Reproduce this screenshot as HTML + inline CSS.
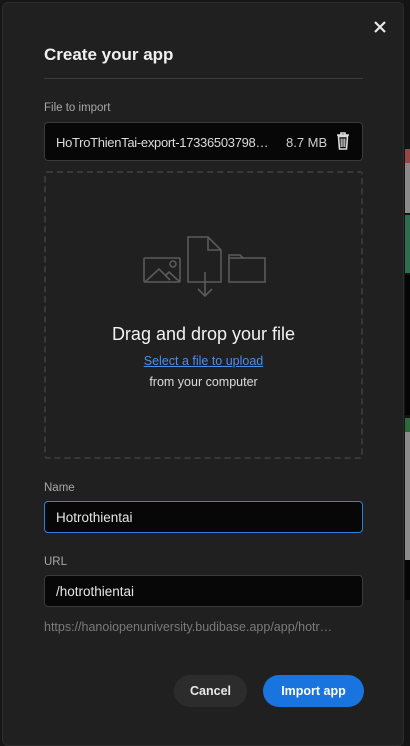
<!DOCTYPE html>
<html><head><style>
*{box-sizing:border-box;margin:0;padding:0}
body{width:410px;height:746px;background:#161616;font-family:"Liberation Sans",sans-serif;position:relative;overflow:hidden;color:#e0e0e0}
.strip{position:absolute;left:404px;top:0;width:6px;height:746px;background:#141414}
.modal{position:absolute;left:2px;top:2px;width:402px;height:744px;background:#202020;border:1px solid #2c2c2c;border-radius:6px}
.a{position:absolute}
.lbl{font-size:11.5px;color:#a8a8a8}
.inp{position:absolute;left:44px;width:319px;height:32px;background:#070707;border:1px solid #3a3a3a;border-radius:4px;font-size:13.5px;color:#e6e6e6;padding:8px 11px;line-height:15px}
</style></head><body>
<div class="strip">
<div class="a" style="left:1px;top:149px;width:5px;height:14px;background:#9a4545"></div>
<div class="a" style="left:1px;top:163px;width:5px;height:50px;background:#8a8a8a"></div>
<div class="a" style="left:1px;top:215px;width:5px;height:58px;background:#2d6e4e"></div>
<div class="a" style="left:1px;top:275px;width:5px;height:140px;background:#050505"></div>
<div class="a" style="left:1px;top:418px;width:5px;height:14px;background:#2b6b38"></div>
<div class="a" style="left:1px;top:432px;width:5px;height:128px;background:#8c8c8c"></div>
<div class="a" style="left:1px;top:560px;width:5px;height:40px;background:#050505"></div>
</div>
<div class="modal"></div>
<svg class="a" style="left:373px;top:20px" width="14" height="14" viewBox="0 0 14 14"><path d="M2 2L12 12M12 2L2 12" stroke="#e8e8e8" stroke-width="2.2"/></svg>
<div class="a" style="left:44px;top:45px;font-size:17px;font-weight:bold;color:#f0f0f0">Create your app</div>
<div class="a" style="left:44px;top:78px;width:319px;height:1px;background:#3c3c3c"></div>
<div class="a lbl" style="left:44px;top:102px">File to import</div>
<div class="inp" style="top:122px;height:39px;padding:12px 11px;border-color:#3a3a3a"><span style="color:#dcdcdc;font-size:13px;letter-spacing:-0.3px">HoTroThienTai-export-17336503798…</span><span class="a" style="left:241px;top:12px;color:#cfcfcf;font-size:13px">8.7 MB</span>
<svg class="a" style="left:291px;top:9px" width="14" height="18" viewBox="0 0 14 18"><path d="M1 3H13M5 3V1H9V3M2.5 4.5L3.5 17H10.5L11.5 4.5Z" fill="none" stroke="#ddd" stroke-width="1.6"/><path d="M5.2 6.5V15M7 6.5V15M8.8 6.5V15" stroke="#ddd" stroke-width="1.1"/></svg></div>
<div class="a" style="left:44px;top:171px;width:319px;height:288px;border:2px dashed #383838;border-radius:3px"></div>
<svg class="a" style="left:130px;top:220px" width="150" height="80" viewBox="0 0 150 80" fill="none" stroke="#5a5a5a" stroke-width="1.6">
<rect x="14" y="38" width="36" height="24" rx="1"/><circle cx="43" cy="44" r="3"/><path d="M15 62L29 49L40 60M35 56L39 52L50 62"/>
<path d="M58 17H78L91 30V62H58Z"/><path d="M78 17V30H91"/><path d="M75 52V76M68 69L75 76L82 69"/>
<path d="M99 62V35H110L113 38H135V62Z"/><path d="M99 38H113"/>
</svg>
<div class="a" style="left:44px;width:319px;top:324px;text-align:center;font-size:18px;color:#f2f2f2">Drag and drop your file</div>
<div class="a" style="left:44px;width:319px;top:354px;text-align:center;font-size:12.5px;color:#4a90e8;text-decoration:underline">Select a file to upload</div>
<div class="a" style="left:44px;width:319px;top:375px;text-align:center;font-size:12.5px;color:#dcdcdc">from your computer</div>
<div class="a lbl" style="left:44px;top:482px">Name</div>
<div class="inp" style="top:501px;border-color:#2f7de0">Hotrothientai</div>
<div class="a lbl" style="left:44px;top:556px">URL</div>
<div class="inp" style="top:575px">/hotrothientai</div>
<div class="a" style="left:44px;top:620px;font-size:12.5px;color:#7a7a7a">https://hanoiopenuniversity.budibase.app/app/hotr…</div>
<div class="a" style="left:174px;top:675px;width:73px;height:32px;border-radius:16px;background:#2c2c2c;color:#e8e8e8;font-size:12.5px;font-weight:bold;text-align:center;line-height:32px">Cancel</div>
<div class="a" style="left:263px;top:675px;width:101px;height:32px;border-radius:16px;background:#1a74e0;color:#fff;font-size:12.5px;font-weight:bold;text-align:center;line-height:32px">Import app</div>
</body></html>
